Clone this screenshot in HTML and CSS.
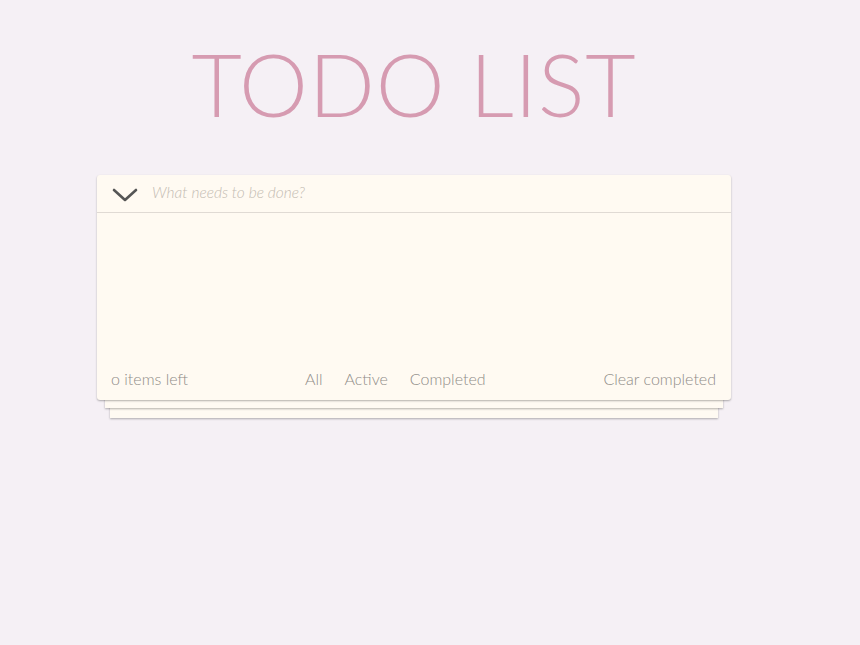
FILE: index.html
```html
<!DOCTYPE html>
<html>
<head>
<meta charset="utf-8">
<link rel="stylesheet" href="styles.css">
</head>
<body>
<div class="page">
  <h1 class="title">TODO LIST</h1>
  <section class="card">
    <header class="head">
      <span class="toggle">
        <svg width="26" height="16" viewBox="0 0 26 16"><path d="M2 3 L13 13 L24 3" fill="none" stroke="#555" stroke-width="2.6" stroke-linecap="round" stroke-linejoin="round"/></svg>
      </span>
      <span class="placeholder">What needs to be done?</span>
    </header>
    <div class="list"></div>
    <footer class="foot">
      <span class="count">o items left</span>
      <nav class="filters">
        <span class="filter">All</span>
        <span class="filter">Active</span>
        <span class="filter">Completed</span>
      </nav>
      <span class="clear">Clear completed</span>
    </footer>
  </section>
</div>
</body>
</html>
```
FILE: styles.css
```css
html, body {
  margin: 0;
  padding: 0;
  background: #f5f0f5;
  height: 100%;
}
body {
  font-family: "Lato", "Open Sans", sans-serif;
}
.page {
  width: 634px;
  margin-left: 97px;
  padding-top: 34px;
}
.title {
  margin: 0;
  text-align: center;
  font-weight: 300;
  font-size: 87px;
  line-height: 100px;
  color: #d69bb1;
  letter-spacing: 0.8px;
}
.card {
  margin-top: 41px;
  height: 225px;
  background: #fffaf2;
  border-radius: 3px;
  display: flex;
  flex-direction: column;
  box-shadow:
    0 1px 2px rgba(0,0,0,0.3),
    0 16px 0 -8px #fffaf2,
    0 17px 2px -8px rgba(0,0,0,0.3),
    0 31px 0 -13px #fffaf2,
    0 32px 2px -13px rgba(0,0,0,0.3);
}
.head {
  height: 37px;
  border-bottom: 1px solid #e0dad4;
  display: flex;
  align-items: center;
}
.toggle {
  width: 55px;
  display: flex;
  justify-content: center;
  padding-top: 2px;
}
.toggle svg { display: block; margin-left: 1px; }
.placeholder {
  font-style: italic;
  font-weight: 300;
  font-size: 15.5px;
  color: #c4bcb3;
  margin-top: -3px;
}
.list { flex: 1; }
.foot {
  height: 42px;
  display: flex;
  align-items: center;
  padding: 0 15px 0 14px;
  font-size: 16px;
  font-weight: 300;
  color: #8f8c88;
  margin-bottom: 1px;
}
.count { width: 194px; }
.filters {
  display: flex;
  gap: 22px;
}
.clear { margin-left: auto; }
```
